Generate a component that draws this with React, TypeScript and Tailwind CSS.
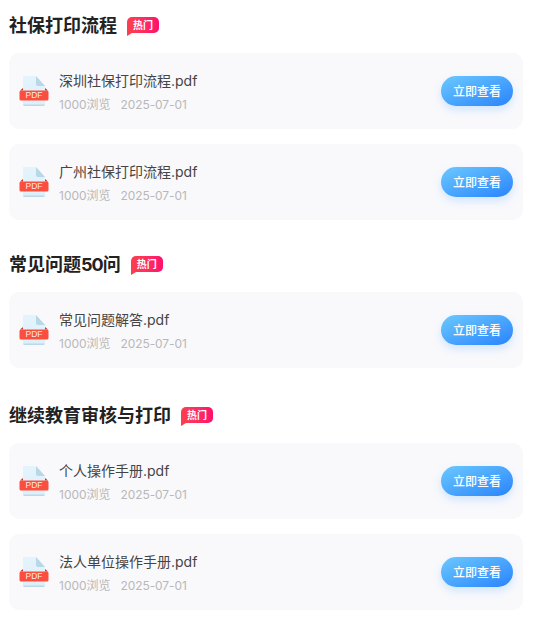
import type { ReactNode } from "react";

const FONT = '"Inter", "Noto Sans CJK SC", sans-serif';

function PdfIcon() {
  return (
    <svg width="30" height="32" viewBox="0 0 30 32" className="shrink-0">
      <defs>
        <linearGradient id="pg" x1="0" y1="0" x2="0" y2="1">
          <stop offset="0" stopColor="#e4f4fd" />
          <stop offset="1" stopColor="#dceff9" />
        </linearGradient>
      </defs>
      <path d="M4 1H17L26 11V29a2 2 0 0 1-2 2H6a2 2 0 0 1-2-2Z" fill="url(#pg)" />
      <path d="M4 29.5H26a2 2 0 0 1-2 1.5H6a2 2 0 0 1-2-1.5Z" fill="#bcd9ea" />
      <path d="M17 1L26 11H19a2 2 0 0 1-2-2Z" fill="#b8d7e7" />
      <path d="M1 15.5L4 13V15.5Z M29 15.5L26 13V15.5Z" fill="#c9362b" />
      <rect x="0.5" y="15.5" width="29" height="10" rx="1.5" fill="#fc4e3e" />
      <text x="15" y="23.4" textAnchor="middle" fontSize="8.5" fill="#ffe9e6" style={{ fontFamily: '"Liberation Sans", sans-serif' }}>PDF</text>
    </svg>
  );
}

function Item({ name }: { name: string }) {
  return (
    <div className="flex h-[76px] items-center rounded-[10px] bg-[#f9f9fc] pl-[10px] pr-[10px]">
      <PdfIcon />
      <div className="ml-[10px] flex-1 pt-[3px]">
        <div className="text-[14px] leading-[20px] text-[#444]">{name}</div>
        <div className="mt-[4px] flex gap-[10px] text-[12px] leading-[20px] text-[#b8b8b8]">
          <span>1000浏览</span>
          <span className="tracking-[-0.1px]">2025-07-01</span>
        </div>
      </div>
      <button className="h-[30px] w-[72px] rounded-full bg-gradient-to-br from-[#6cc8fe] to-[#2a83fb] pt-[1px] text-[12px] font-medium text-white shadow-[0_4px_8px_rgba(90,170,255,0.25)]">
        立即查看
      </button>
    </div>
  );
}

function Section({ title, items, className }: { title: ReactNode; items: string[]; className: string }) {
  return (
    <section className={className}>
      <div className="flex h-[24px] items-center gap-[10px]">
        <h2 className="text-[18px] font-bold leading-[24px] text-[#222]">{title}</h2>
        <span className="relative mb-[2px] flex h-[16px] w-[32px] items-center justify-center rounded-[5px] rounded-bl-none bg-gradient-to-r from-[#fb3f4e] to-[#ff0d6c] text-[10px] font-bold leading-none text-white">
          热门
          <svg width="5" height="3" viewBox="0 0 5 3" className="absolute left-0 top-[15.5px]">
            <path d="M0 0H5L0 3Z" fill="#fb3f4e" />
          </svg>
        </span>
      </div>
      <div className="mt-[15px] flex flex-col gap-[15px]">
        {items.map((n) => (
          <Item key={n} name={n} />
        ))}
      </div>
    </section>
  );
}

export default function App() {
  return (
    <div className="h-[629px] w-[534px] overflow-hidden bg-white pl-[9px] pr-[11px] pt-[14px]" style={{ fontFamily: FONT }}>
      <Section title="社保打印流程" items={["深圳社保打印流程.pdf", "广州社保打印流程.pdf"]} className="" />
      <Section title={<>常见问题<span className="tracking-[-1px]">50</span>问</>} items={["常见问题解答.pdf"]} className="mt-[33px]" />
      <Section title="继续教育审核与打印" items={["个人操作手册.pdf", "法人单位操作手册.pdf"]} className="mt-[36px]" />
    </div>
  );
}
